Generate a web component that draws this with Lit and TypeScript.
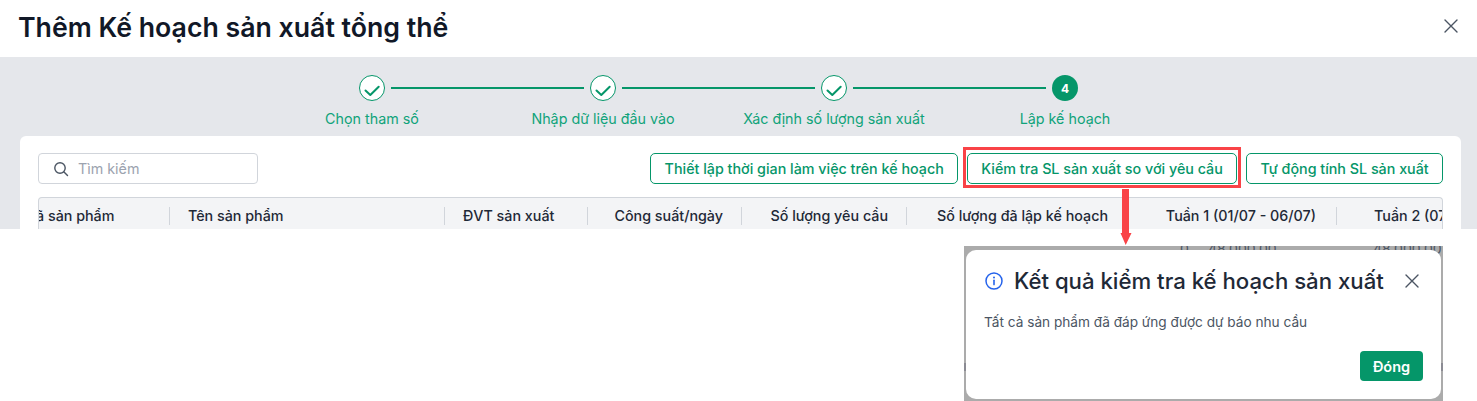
import { LitElement, html, css, svg, unsafeCSS } from "lit";
import { customElement } from "lit/decorators.js";

const green = "#059669";
const greenCss = unsafeCSS(green);

const steps = ["Chọn tham số", "Nhập dữ liệu đầu vào", "Xác định số lượng sản xuất", "Lập kế hoạch"];

// right aligned columns have a separator after 18px of padding
const columns = [
  { label: "ã sản phẩm", width: 131, cls: "first" },
  { label: "Tên sản phẩm", width: 275, cls: "left" },
  { label: "ĐVT sản xuất", width: 143, cls: "left" },
  { label: "Công suất/ngày", width: 154, cls: "right" },
  { label: "Số lượng yêu cầu", width: 165, cls: "right" },
  { label: "Số lượng đã lập kế hoạch", width: 220, cls: "right" },
  { label: "Tuần 1 (01/07 - 06/07)", width: 210, cls: "right week" },
  { label: "Tuần 2 (07/07 - 13/07)", width: 200, cls: "left second" },
];

const closeIcon = (size: number) => html`<svg width=${size} height=${size} viewBox="0 0 16 16" fill="none">
  <path d="M2 2 14 14M14 2 2 14" stroke="currentColor" stroke-width="1.4" stroke-linecap="round" />
</svg>`;

const checkIcon = svg`<path d="M6.5 15.5 11.3 20 19.7 11.7" fill="none" stroke="${green}" stroke-width="2" stroke-linecap="round" stroke-linejoin="round" />`;

@customElement("app-root")
export class AppRoot extends LitElement {
  static styles = css`
    :host {
      display: block;
      width: 1477px;
      height: 401px;
      overflow: hidden;
      background: #fff;
      font-family: Inter, "Noto Sans", sans-serif;
      position: relative;
    }
    .header {
      height: 57px;
      display: flex;
      align-items: center;
      justify-content: space-between;
      padding: 0 18px 0 18px;
      box-sizing: border-box;
    }
    h1 {
      margin: 0 0 4px;
      font-size: 26.7px;
      font-weight: 600;
      color: #111827;
      line-height: 32px;
    }
    .x {
      color: #4b5563;
      display: flex;
      margin-bottom: 6px;
    }
    .body {
      height: 172px;
      background: #e5e7eb;
      padding: 18px 16px 0 20px;
      box-sizing: border-box;
      overflow: hidden;
    }
    .stepper {
      display: flex;
      justify-content: center;
      height: 61px;
      padding-right: 44px;
    }
    .step {
      width: 231px;
      display: flex;
      flex-direction: column;
      align-items: center;
      position: relative;
    }
    .circle {
      width: 26px;
      height: 26px;
      display: block;
    }
    .num {
      width: 26px;
      height: 26px;
      border-radius: 50%;
      background: ${greenCss};
      color: #fff;
      font-size: 12px;
      font-weight: 700;
      display: flex;
      align-items: center;
      justify-content: center;
    }
    .line {
      position: absolute;
      top: 13px;
      left: calc(50% + 19px);
      width: 193px;
      height: 2px;
      margin-top: -1px;
      background: ${greenCss};
    }
    .label {
      margin-top: 8px;
      font-size: 14.3px;
      line-height: 20px;
      color: #10a37a;
      white-space: nowrap;
    }
    .card {
      background: #fff;
      border-radius: 6px 6px 0 0;
      height: 93px;
      padding: 17px 18px 0 18px;
      box-sizing: border-box;
    }
    .toolbar {
      display: flex;
      align-items: center;
      gap: 9px;
    }
    .search {
      width: 220px;
      height: 31px;
      box-sizing: border-box;
      border: 1px solid #d1d5db;
      border-radius: 4px;
      display: flex;
      align-items: center;
      gap: 9px;
      padding-left: 14px;
      margin-right: auto;
      font-size: 14.3px;
      color: #9ca3af;
    }
    .search svg {
      color: #4b5563;
    }
    .btn {
      height: 31px;
      box-sizing: border-box;
      border: 1px solid ${greenCss};
      border-radius: 5px;
      padding: 0 13.3px;
      display: flex;
      align-items: center;
      font-size: 14.3px;
      font-weight: 500;
      color: ${greenCss};
      white-space: nowrap;
      background: #fff;
      position: relative;
    }
    .hl::after {
      content: "";
      position: absolute;
      inset: -7px -5px -5px -5px;
      border: 3px solid #f94347;
    }
    .table {
      margin-top: 13px;
      height: 40px;
      background: #f3f4f6;
      border: 1px solid #d1d5db;
      border-bottom: 0;
      border-radius: 4px 4px 0 0;
      display: flex;
      overflow: hidden;
      box-sizing: border-box;
      padding-top: 9px;
    }
    .col {
      flex: none;
      box-sizing: border-box;
      height: 18px;
      line-height: 18px;
      font-size: 14.3px;
      font-weight: 500;
      color: #1f2937;
      white-space: nowrap;
      border-right: 1px solid #d1d5db;
    }
    .first {
      text-indent: -3px;
    }
    .left {
      padding-left: 18px;
    }
    .right {
      text-align: right;
      padding-right: 18px;
    }
    .week {
      padding-right: 20px;
    }
    .second {
      padding-left: 37px;
      border: 0;
    }
    .arrow {
      position: absolute;
      left: 1120px;
      top: 189px;
    }
    .shot {
      position: absolute;
      left: 964px;
      top: 246px;
      width: 479px;
      height: 155px;
      background: #ababab;
      overflow: hidden;
    }
    .ghost {
      position: absolute;
      top: -6px;
      font-size: 14px;
      color: #4b5563;
    }
    .patch {
      position: absolute;
      top: 117px;
      width: 3px;
      height: 8px;
      background: #8b8b93;
    }
    .dialog {
      position: absolute;
      left: 2px;
      top: 4px;
      width: 475px;
      height: 149px;
      background: #fff;
      border-radius: 10px;
      padding: 18px 18px 0 19px;
      box-sizing: border-box;
    }
    .d-head {
      display: flex;
      align-items: center;
      height: 26px;
    }
    .d-head h2 {
      margin: 0 0 0 11px;
      font-size: 22.2px;
      font-weight: 500;
      line-height: 26px;
      color: #1f2937;
      white-space: nowrap;
      flex: 1;
    }
    .d-x {
      color: #4b5563;
      display: flex;
      margin-right: 3px;
    }
    .d-text {
      margin: 18px 0 0 -1px;
      font-size: 13.65px;
      line-height: 20px;
      color: #4b5563;
    }
    .d-foot {
      display: flex;
      justify-content: flex-end;
      margin-top: 19px;
    }
    .primary {
      height: 30px;
      width: 63px;
      border-radius: 4px;
      background: ${greenCss};
      color: #fff;
      font-size: 14.5px;
      font-weight: 600;
      display: flex;
      align-items: center;
      justify-content: center;
    }
  `;

  render() {
    return html`
      <div class="header">
        <h1>Thêm Kế hoạch sản xuất tổng thể</h1>
        <span class="x">${closeIcon(16)}</span>
      </div>
      <div class="body">
        <div class="stepper">
          ${steps.map(
            (s, i) => html`<div class="step">
              ${i < 3
                ? html`<svg class="circle" viewBox="0 0 26 26">
                    <circle cx="13" cy="13" r="12.5" fill="#fff" stroke=${green} />
                    ${checkIcon}
                  </svg>`
                : html`<div class="num">4</div>`}
              ${i < 3 ? html`<div class="line"></div>` : ""}
              <div class="label">${s}</div>
            </div>`,
          )}
        </div>
        <div class="card">
          <div class="toolbar">
            <div class="search">
              <svg width="16" height="16" viewBox="0 0 16 16" fill="none">
                <circle cx="7" cy="7" r="5.2" stroke="currentColor" stroke-width="1.4" />
                <path d="M11 11 14.5 14.5" stroke="currentColor" stroke-width="1.4" stroke-linecap="round" />
              </svg>
              <span>Tìm kiếm</span>
            </div>
            <div class="btn">Thiết lập thời gian làm việc trên kế hoạch</div>
            <div class="btn hl">Kiểm tra SL sản xuất so với yêu cầu</div>
            <div class="btn">Tự động tính SL sản xuất</div>
          </div>
          <div class="table">
            ${columns.map((c) => html`<div class="col ${c.cls}" style="width:${c.width}px">${c.label}</div>`)}
          </div>
        </div>
      </div>
      <svg class="arrow" width="12" height="56" viewBox="0 0 12 56">
        <path d="M2 0H9V44H11.5L5.7 56 0.5 44H2Z" fill="#f94347" />
      </svg>
      <div class="shot">
        <span class="ghost" style="left:216px">0</span>
        <span class="ghost" style="left:244px">48.000,00</span>
        <span class="ghost" style="left:409px">48.000,00</span>
        <span class="patch" style="left:0"></span>
        <span class="patch" style="right:0"></span>
        <div class="dialog">
          <div class="d-head">
            <svg width="18" height="18" viewBox="0 0 18 18" fill="none">
              <circle cx="9" cy="9" r="8" stroke="#2563eb" stroke-width="1.5" />
              <path d="M9 8.2V12.6" stroke="#2563eb" stroke-width="1.6" stroke-linecap="round" />
              <circle cx="9" cy="5.6" r="1" fill="#2563eb" />
            </svg>
            <h2>Kết quả kiểm tra kế hoạch sản xuất</h2>
            <span class="d-x">${closeIcon(16)}</span>
          </div>
          <div class="d-text">Tất cả sản phẩm đã đáp ứng được dự báo nhu cầu</div>
          <div class="d-foot"><div class="primary">Đóng</div></div>
        </div>
      </div>
    `;
  }
}
